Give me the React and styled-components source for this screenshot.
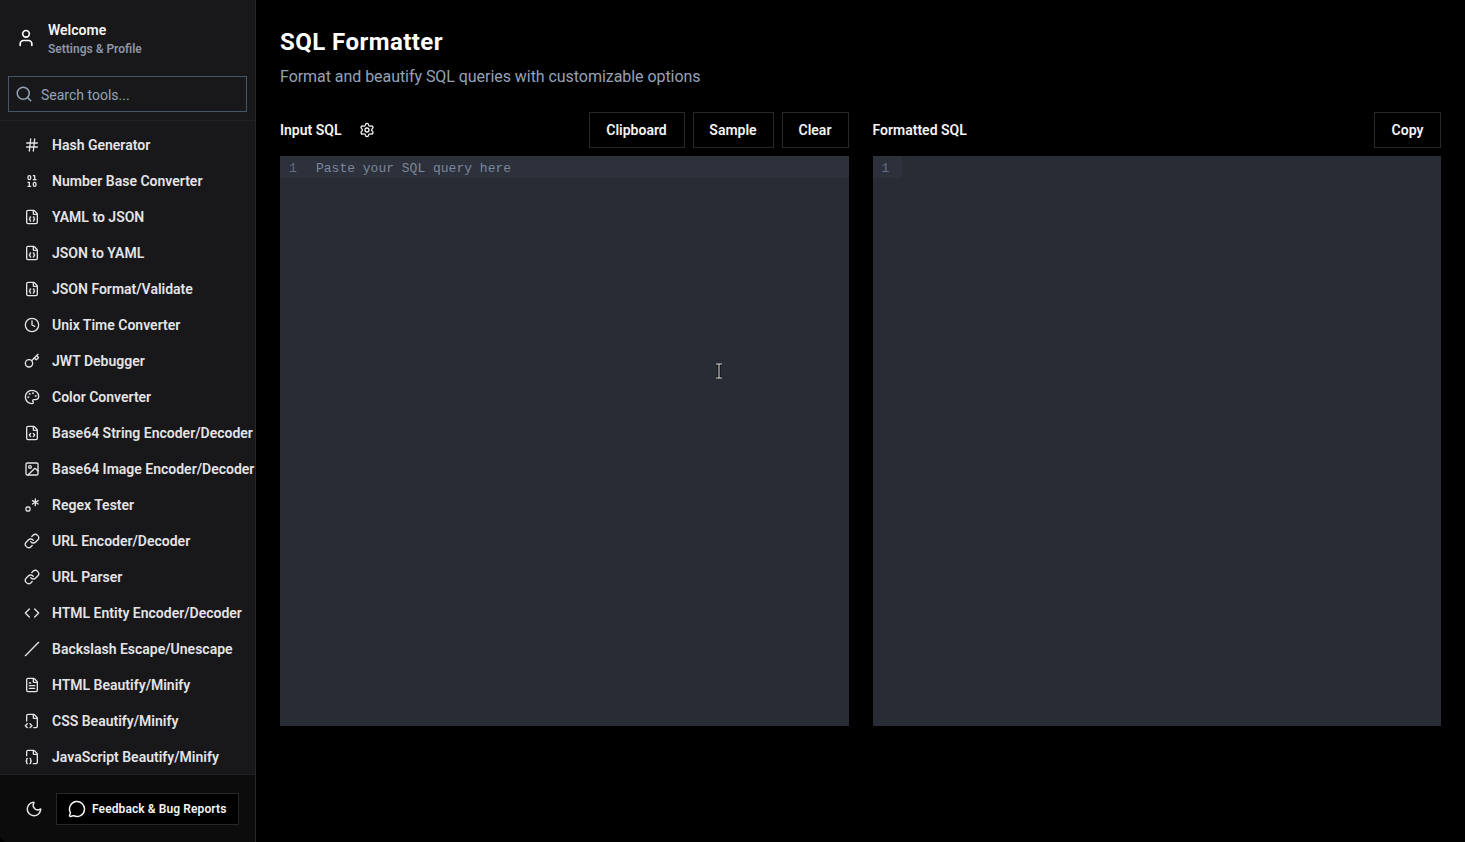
import React from 'react';
import styled, { createGlobalStyle } from 'styled-components';
import {
  User, Search, Hash, Binary, FileJson, Clock, Key, Palette, FileCode, Image as ImageIcon,
  Regex, Link, Code, Slash, FileText, FileCode2, FileJson2, Moon, MessageCircle, Settings,
} from 'lucide-react';

const UI = '"Roboto", "Open Sans", "Liberation Sans", sans-serif';

const Global = createGlobalStyle`
  html, body { margin: 0; padding: 0; height: 100%; background: #000; overflow: hidden; }
  #root { height: 100%; }
  * { box-sizing: border-box; }
  body { font-family: ${UI}; }
`;

const Shell = styled.div`
  display: flex;
  width: 100%;
  height: 842px;
  background: #000;
  position: relative;
`;
const Sidebar = styled.aside`
  width: 256px;
  flex: none;
  display: flex;
  flex-direction: column;
  background: #18181b;
  border-right: 1px solid #27272a;
  border-bottom-left-radius: 8px;
  overflow: hidden;
`;
const SideHead = styled.div`
  height: 121px;
  flex: none;
  padding: 16px 8px 0;
  border-bottom: 1px solid #222226;
`;
const Profile = styled.div`
  display: flex;
  align-items: center;
  gap: 12px;
  height: 44px;
  padding-left: 8px;
  margin-bottom: 16px;
  color: #fafafa;
`;
const ProfileText = styled.div`
  display: flex;
  flex-direction: column;
  padding-top: 2px;
`;
const ProfileName = styled.span`
  font-size: 14px;
  line-height: 20px;
  font-weight: 600;
  color: #f4f4f5;
`;
const ProfileSub = styled.span`
  font-size: 12px;
  line-height: 18px;
  font-weight: 600;
  color: #8b95a5;
`;
const SearchBox = styled.div`
  display: flex;
  align-items: center;
  gap: 8px;
  width: 239px;
  height: 36px;
  padding: 0 6px;
  border: 1px solid #475569;
  color: #94a3b8;
  background: #18181b;
`;
const SearchText = styled.span`
  font-size: 14px;
  line-height: 22px;
  padding-top: 1px;
  color: #94a3b8;
`;
const ToolList = styled.nav`
  flex: 1;
  min-height: 0;
  padding-top: 6px;
  overflow: hidden;
`;
const ToolRow = styled.div`
  display: flex;
  align-items: center;
  gap: 12px;
  height: 36px;
  padding-left: 24px;
  white-space: nowrap;
  color: #e4e4e7;
`;
const ToolLabel = styled.span`
  font-size: 14px;
  font-weight: 600;
`;
const SideFoot = styled.div`
  height: 68px;
  flex: none;
  display: flex;
  align-items: center;
  padding: 0 16px 0 25px;
  gap: 13px;
  background: #0c0c0d;
  border-top: 1px solid #222226;
  color: #e4e4e7;
`;
const FeedbackBtn = styled.button`
  display: flex;
  align-items: center;
  gap: 6px;
  width: 183px;
  height: 32px;
  padding: 0 0 0 11px;
  background: #000;
  border: 1px solid #27272a;
  color: #f4f4f5;
  font: 600 12px ${UI};
  letter-spacing: 0.1px;
  white-space: nowrap;
`;
const Main = styled.main`
  flex: 1;
  min-width: 0;
  padding: 24px 24px 0;
  color: #fff;
`;
const Title = styled.h1`
  margin: 0;
  font-size: 24px;
  line-height: 36px;
  font-weight: 700;
  letter-spacing: 0.45px;
  color: #fff;
`;
const Description = styled.p`
  margin: 5px 0 0;
  font-size: 16px;
  line-height: 24px;
  letter-spacing: -0.05px;
  color: #94a3b8;
`;
const Columns = styled.div`
  display: grid;
  grid-template-columns: 1fr 1fr;
  gap: 24px;
  margin-top: 23px;
`;
const Column = styled.section`
  display: flex;
  flex-direction: column;
  min-width: 0;
`;
const PanelHead = styled.div`
  display: flex;
  align-items: center;
  justify-content: space-between;
  height: 36px;
  margin-bottom: 8px;
`;
const LabelGroup = styled.div`
  display: flex;
  align-items: center;
  gap: 18px;
  color: #f4f4f5;
`;
const PanelLabel = styled.span`
  font-size: 14px;
  font-weight: 600;
  color: #f4f4f5;
`;
const ButtonGroup = styled.div`
  display: flex;
  gap: 8px;
`;
const ActionBtn = styled.button`
  width: ${p => p.$width}px;
  height: 36px;
  padding: 0;
  background: #000;
  border: 1px solid #27272a;
  color: #f4f4f5;
  font: 600 14px ${UI};
`;
const Editor = styled.div`
  height: 570px;
  background: #282c34;
  font: 13px/26px "Liberation Mono", monospace;
`;
const EditorLine = styled.div`
  display: flex;
  height: 22px;
  background: ${p => (p.$active ? '#2c313c' : 'transparent')};
`;
const Gutter = styled.span`
  width: 29px;
  height: 22px;
  padding-left: 9px;
  flex: none;
  background: #2c313c;
  color: #636d83;
`;
const Placeholder = styled.span`
  margin-left: 7px;
  color: #7d8799;
`;
const Caret = styled.svg`
  position: absolute;
  left: 715px;
  top: 363px;
  pointer-events: none;
`;

const tools = [
  ['Hash Generator', Hash], ['Number Base Converter', Binary], ['YAML to JSON', FileJson],
  ['JSON to YAML', FileJson], ['JSON Format/Validate', FileJson], ['Unix Time Converter', Clock],
  ['JWT Debugger', Key], ['Color Converter', Palette], ['Base64 String Encoder/Decoder', FileCode],
  ['Base64 Image Encoder/Decoder', ImageIcon], ['Regex Tester', Regex], ['URL Encoder/Decoder', Link],
  ['URL Parser', Link], ['HTML Entity Encoder/Decoder', Code], ['Backslash Escape/Unescape', Slash],
  ['HTML Beautify/Minify', FileText], ['CSS Beautify/Minify', FileCode2], ['JavaScript Beautify/Minify', FileJson2],
];

export default function App() {
  return (
    <Shell>
      <Global />
      <Sidebar>
        <SideHead>
          <Profile>
            <User size={20} strokeWidth={2} />
            <ProfileText>
              <ProfileName>Welcome</ProfileName>
              <ProfileSub>Settings &amp; Profile</ProfileSub>
            </ProfileText>
          </Profile>
          <SearchBox>
            <Search size={18} />
            <SearchText>Search tools...</SearchText>
          </SearchBox>
        </SideHead>
        <ToolList>
          {tools.map(([name, Icon]) => (
            <ToolRow key={name}>
              <Icon size={16} strokeWidth={2} />
              <ToolLabel>{name}</ToolLabel>
            </ToolRow>
          ))}
        </ToolList>
        <SideFoot>
          <Moon size={18} />
          <FeedbackBtn>
            <MessageCircle size={18} />
            Feedback &amp; Bug Reports
          </FeedbackBtn>
        </SideFoot>
      </Sidebar>
      <Main>
        <Title>SQL Formatter</Title>
        <Description>Format and beautify SQL queries with customizable options</Description>
        <Columns>
          <Column>
            <PanelHead>
              <LabelGroup>
                <PanelLabel>Input SQL</PanelLabel>
                <Settings size={16} />
              </LabelGroup>
              <ButtonGroup>
                <ActionBtn $width={96}>Clipboard</ActionBtn>
                <ActionBtn $width={81}>Sample</ActionBtn>
                <ActionBtn $width={67}>Clear</ActionBtn>
              </ButtonGroup>
            </PanelHead>
            <Editor>
              <EditorLine $active>
                <Gutter>1</Gutter>
                <Placeholder>Paste your SQL query here</Placeholder>
              </EditorLine>
            </Editor>
          </Column>
          <Column>
            <PanelHead>
              <PanelLabel>Formatted SQL</PanelLabel>
              <ActionBtn $width={67}>Copy</ActionBtn>
            </PanelHead>
            <Editor>
              <EditorLine>
                <Gutter>1</Gutter>
              </EditorLine>
            </Editor>
          </Column>
        </Columns>
      </Main>
      <Caret width="8" height="16" viewBox="0 0 8 16" aria-hidden="true">
        <path d="M1 1h6M4 1v14M1 15h6" stroke="#000" strokeWidth="3" fill="none" opacity=".7" />
        <path d="M1 1h6M4 1v14M1 15h6" stroke="#e8e8e8" strokeWidth="1" fill="none" />
      </Caret>
    </Shell>
  );
}
